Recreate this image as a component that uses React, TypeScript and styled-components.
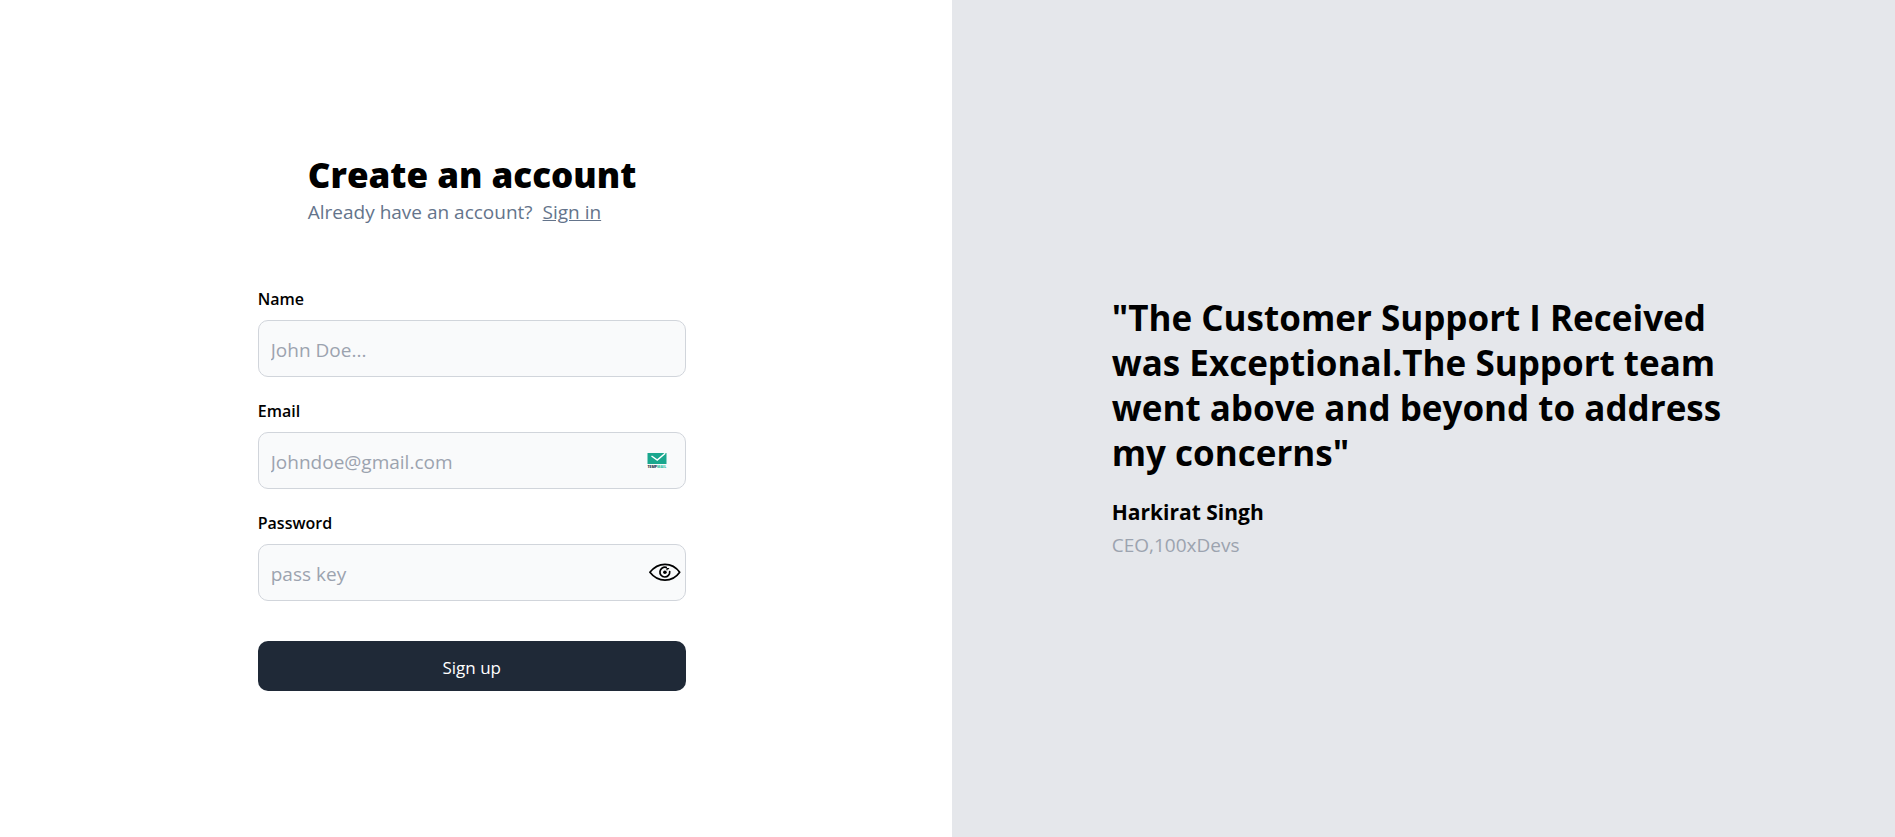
import React, { useId, useState } from "react";
import styled, { createGlobalStyle } from "styled-components";

const GlobalStyle = createGlobalStyle`
  *, *::before, *::after { box-sizing: border-box; }
  body {
    margin: 0;
    background: #fff;
    color: #000;
    font-family: "Segoe UI", "Open Sans", "Noto Sans", sans-serif;
    font-size: 18px;
  }
  h1, p, blockquote, figure { margin: 0; }
  button, input { font: inherit; }
`;

const Page = styled.main`
  display: grid;
  grid-template-columns: 1fr 1fr;
  column-gap: 8px;
  min-height: 100vh;
`;

const FormPane = styled.section`
  display: flex;
  flex-direction: column;
  align-items: center;
  justify-content: center;
  padding: 6px 16px 0;
`;

const Intro = styled.header`
  width: 328px;
  margin-bottom: 58px;
  white-space: nowrap;
`;

const Title = styled.h1`
  font-size: 35px;
  line-height: 44px;
  font-weight: 800;
`;

const Subtitle = styled.p`
  color: #64748b;
  font-size: 19px;
  line-height: 30px;
`;

const SignInLink = styled.a`
  margin-left: 10px;
  color: inherit;
  text-decoration: underline;
`;

const Form = styled.form`
  display: flex;
  flex-direction: column;
  gap: 20px;
  width: 100%;
  max-width: 428px;
`;

const Field = styled.div`
  display: flex;
  flex-direction: column;
  gap: 7px;
`;

const Label = styled.label`
  font-size: 16px;
  line-height: 28px;
  font-weight: 600;
`;

const InputWrap = styled.div`
  position: relative;
`;

const Input = styled.input`
  display: block;
  width: 100%;
  height: 57px;
  padding: 3px 12px 0;
  border: 1px solid #d1d5db;
  border-radius: 10px;
  background: #f9fafb;
  color: #111827;
  font-size: 19px;
  &::placeholder { color: #9ca3af; opacity: 1; }
`;

const MailMark = styled.svg`
  position: absolute;
  top: 20px;
  right: 19px;
  width: 20px;
  height: 17px;
  overflow: visible;
`;

const RevealButton = styled.button`
  position: absolute;
  top: 12px;
  right: 5px;
  display: flex;
  padding: 0;
  border: 0;
  background: none;
  cursor: pointer;
`;

const SubmitButton = styled.button`
  height: 50px;
  margin-top: 20px;
  padding: 3px 20px 0;
  border: 0;
  border-radius: 10px;
  background: #1f2937;
  color: #fff;
  font-size: 17px;
  cursor: pointer;
`;

const QuotePane = styled.section`
  display: flex;
  align-items: center;
  justify-content: center;
  padding: 18px 16px 0;
  background: #e5e7eb;
`;

const Testimonial = styled.figure`
  width: 100%;
  max-width: 623px;
`;

const Quote = styled.blockquote`
  font-size: 35px;
  line-height: 45px;
  font-weight: 700;
`;

const Author = styled.p`
  margin-top: 20px;
  font-size: 21px;
  line-height: 35px;
  font-weight: 700;
`;

const Role = styled.p`
  color: #9ca3af;
  font-size: 19px;
  line-height: 30px;
`;

function TempMailIcon() {
  return (
    <MailMark viewBox="0 0 40 34" aria-hidden="true">
      <path d="M1 2H39V24H1Z" fill="#1aa78e" />
      <path d="M9 8 20.5 16 36.500 2.500" fill="none" stroke="#fff" strokeWidth="3" />
      <text x="1" y="32" fontSize="7" fontWeight="800" fill="#1c3448">
        TEMP<tspan fill="#2fc0a2">MAIL</tspan>
      </text>
    </MailMark>
  );
}

function EyeIcon() {
  return (
    <svg width="32" height="32" viewBox="0 0 32 32" fill="none" stroke="#000" strokeWidth="1.7" strokeLinejoin="round" strokeLinecap="round" aria-hidden="true">
      <path d="M0.9 16.3C5 11 10.2 8.3 16 8.3S27 11 30.7 16.3C27 21.5 21.8 24.2 16 24.2S5 21.5 0.9 16.3Z" />
      <path d="M17.2 11.4A4.9 4.9 0 1 0 20.7 15.6" />
      <circle cx="15.9" cy="16.3" r="1.8" fill="#000" stroke="none" />
      <path d="M18 13.8V12.600H19.600" strokeWidth="1.2" />
    </svg>
  );
}

type TextFieldProps = {
  label: string;
  type: string;
  placeholder: string;
  children?: React.ReactNode;
};

function TextField({ label, type, placeholder, children }: TextFieldProps) {
  const id = useId();
  return (
    <Field>
      <Label htmlFor={id}>{label}</Label>
      <InputWrap>
        <Input id={id} type={type} placeholder={placeholder} />
        {children}
      </InputWrap>
    </Field>
  );
}

export default function App() {
  const [visible, setVisible] = useState(false);
  return (
    <>
      <GlobalStyle />
      <Page>
        <FormPane>
          <Intro>
            <Title>Create an account</Title>
            <Subtitle>
              Already have an account?
              <SignInLink href="#signin">Sign in</SignInLink>
            </Subtitle>
          </Intro>
          <Form onSubmit={(e) => e.preventDefault()}>
            <TextField label="Name" type="text" placeholder="John Doe..." />
            <TextField label="Email" type="email" placeholder="Johndoe@gmail.com">
              <TempMailIcon />
            </TextField>
            <TextField label="Password" type={visible ? "text" : "password"} placeholder="pass key">
              <RevealButton type="button" aria-label="Show password" onClick={() => setVisible(!visible)}>
                <EyeIcon />
              </RevealButton>
            </TextField>
            <SubmitButton type="submit">Sign up</SubmitButton>
          </Form>
        </FormPane>
        <QuotePane>
          <Testimonial>
            <Quote>
              "The Customer Support I Received was Exceptional.The Support team went above and beyond to address my
              concerns"
            </Quote>
            <figcaption>
              <Author>Harkirat Singh</Author>
              <Role>CEO,100xDevs</Role>
            </figcaption>
          </Testimonial>
        </QuotePane>
      </Page>
    </>
  );
}
